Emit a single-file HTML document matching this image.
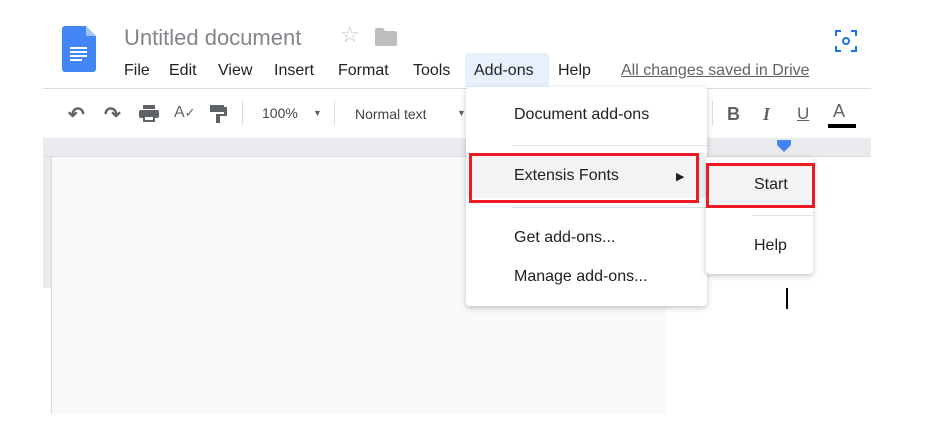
<!DOCTYPE html>
<html><head><style>
body{margin:0;width:933px;height:439px;background:#fff;position:relative;overflow:hidden;font-family:"Liberation Sans",Arial,sans-serif;color:#3c4043}
.a{position:absolute}
.menu span{position:absolute;top:62px;font-size:16px;color:#202124}
.tb{color:#5f6368}
.mi{position:absolute;left:514px;font-size:16px;color:#202124}
</style></head><body>
<svg class="a" style="left:62px;top:26px" width="34" height="46" viewBox="0 0 34 46">
<path d="M3 0H24L34 10V43a3 3 0 0 1-3 3H3a3 3 0 0 1-3-3V3a3 3 0 0 1 3-3z" fill="#4285f4"/>
<path d="M24 0V10H34z" fill="#a1c2fa"/>
<rect x="8" y="21" width="17" height="2" fill="#fff"/><rect x="8" y="25" width="17" height="2" fill="#fff"/><rect x="8" y="29" width="17" height="2" fill="#fff"/><rect x="8" y="33" width="12" height="2" fill="#fff"/>
</svg>
<div class="a" style="left:124px;top:25px;font-size:22px;color:#80868b">Untitled document</div>
<div class="a" style="left:340px;top:22px;font-size:22px;color:#c4c7c5">☆</div>
<svg class="a" style="left:375px;top:28px" width="22" height="18"><path d="M0 2a2 2 0 0 1 2-2h6l2 3h10a2 2 0 0 1 2 2v11a2 2 0 0 1-2 2H2a2 2 0 0 1-2-2z" fill="#bdbdbd"/></svg>
<svg class="a" style="left:835px;top:30px" width="22" height="22" fill="none" stroke="#1a73e8" stroke-width="2"><path d="M1 6V1h5M16 1h5v5M21 16v5h-5M6 21H1v-5"/><circle cx="11" cy="11" r="3"/></svg>
<div class="a" style="left:465px;top:53px;width:84px;height:34px;background:#e8f0fe;border-radius:4px 4px 0 0"></div>
<div class="menu">
<span style="left:124px">File</span><span style="left:169px">Edit</span><span style="left:218px">View</span><span style="left:274px">Insert</span><span style="left:338px">Format</span><span style="left:413px">Tools</span><span style="left:474px">Add-ons</span><span style="left:558px">Help</span>
<span style="left:621px;color:#5f6368;text-decoration:underline">All changes saved in Drive</span>
</div>
<div class="a" style="left:43px;top:88px;width:828px;height:1px;background:#dadce0"></div>
<div class="a tb" style="left:68px;top:102px;font-size:20px;font-weight:bold">↶</div>
<div class="a tb" style="left:104px;top:102px;font-size:20px;font-weight:bold">↷</div>
<svg class="a" style="left:139px;top:105px" width="20" height="18"><rect x="4" y="0" width="12" height="4" fill="#5f6368"/><rect x="0" y="5" width="20" height="8" rx="2" fill="#5f6368"/><rect x="4" y="11" width="12" height="6" fill="#5f6368"/><rect x="6" y="12" width="8" height="3" fill="#fff"/></svg>
<div class="a tb" style="left:174px;top:104px;font-size:16px">A<span style="font-size:13px">✓</span></div>
<svg class="a" style="left:210px;top:105px" width="18" height="18"><rect x="0" y="0" width="14" height="7" fill="#5f6368"/><rect x="14" y="2" width="3" height="7" fill="#5f6368"/><rect x="8" y="9" width="9" height="2" fill="#5f6368"/><rect x="6" y="9" width="4" height="9" fill="#5f6368"/></svg>
<div class="a" style="left:242px;top:101px;width:1px;height:24px;background:#dadce0"></div>
<div class="a tb" style="left:262px;top:105px;font-size:14px;color:#444">100%</div>
<div class="a tb" style="left:313px;top:108px;font-size:9px">▼</div>
<div class="a" style="left:334px;top:101px;width:1px;height:24px;background:#dadce0"></div>
<div class="a" style="left:355px;top:106px;font-size:14px;color:#444">Normal text</div>
<div class="a tb" style="left:457px;top:108px;font-size:9px">▼</div>
<div class="a" style="left:712px;top:101px;width:1px;height:24px;background:#dadce0"></div>
<div class="a tb" style="left:727px;top:104px;font-size:18px;font-weight:bold">B</div>
<div class="a tb" style="left:763px;top:104px;font-size:18px;font-style:italic;font-family:'Liberation Serif',serif;font-weight:bold">I</div>
<div class="a tb" style="left:797px;top:104px;font-size:17px;text-decoration:underline">U</div>
<div class="a tb" style="left:833px;top:101px;font-size:18px">A</div>
<div class="a" style="left:828px;top:124px;width:28px;height:4px;background:#000"></div>
<div class="a" style="left:43px;top:138px;width:828px;height:18px;background:#eaebee;border-bottom:1px solid #dadce0"></div>
<div class="a" style="left:43px;top:157px;width:8px;height:131px;background:#e8eaed"></div>
<div class="a" style="left:51px;top:157px;width:614px;height:257px;background:#f8f9fa;border-left:1px solid #dadce0"></div>
<svg class="a" style="left:775px;top:140px" width="20" height="14"><path d="M2 0h14v5l-7 7-7-7z" fill="#4285f4"/></svg>
<div class="a" style="left:786px;top:288px;width:2px;height:21px;background:#000"></div>
<div class="a" style="left:466px;top:87px;width:241px;height:219px;background:#fff;border-radius:4px;box-shadow:0 2px 6px rgba(60,64,67,.3)"></div>
<div class="mi" style="top:106px">Document add-ons</div>
<div class="a" style="left:512px;top:145px;width:195px;height:1px;background:#e0e0e0"></div>
<div class="a" style="left:466px;top:153px;width:241px;height:45px;background:#f1f3f4"></div>
<div class="a" style="left:469px;top:153px;width:224px;height:44px;border:3px solid #ed1c24"></div>
<div class="mi" style="top:167px">Extensis Fonts</div>
<div class="a" style="left:676px;top:170px;font-size:11px;color:#202124">▶</div>
<div class="a" style="left:512px;top:207px;width:195px;height:1px;background:#e0e0e0"></div>
<div class="mi" style="top:229px">Get add-ons...</div>
<div class="mi" style="top:268px">Manage add-ons...</div>
<div class="a" style="left:706px;top:157px;width:107px;height:117px;background:#fff;border-radius:4px;box-shadow:0 2px 6px rgba(60,64,67,.3)"></div>
<div class="a" style="left:706px;top:163px;background:#f1f3f4;border:3px solid #ed1c24;box-sizing:border-box;width:109px;height:45px"></div>
<div class="a" style="left:754px;top:176px;font-size:16px;color:#202124">Start</div>
<div class="a" style="left:752px;top:215px;width:61px;height:1px;background:#e0e0e0"></div>
<div class="a" style="left:754px;top:237px;font-size:16px;color:#202124">Help</div>
</body></html>
